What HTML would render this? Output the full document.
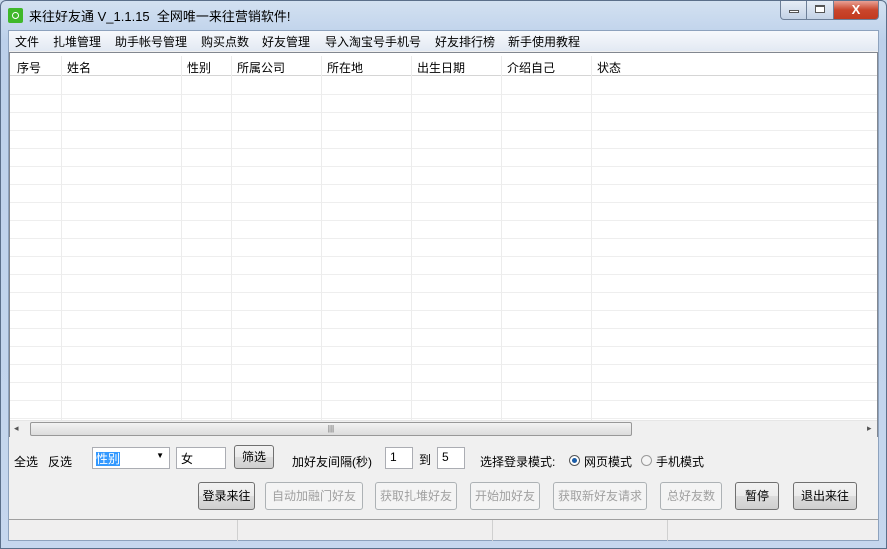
<!DOCTYPE html>
<html><head><meta charset="utf-8"><style>
*{margin:0;padding:0;box-sizing:border-box}
body{width:887px;height:549px;overflow:hidden;background:#c9d9ec;font-family:"Liberation Sans","Noto Sans CJK SC","WenQuanYi Zen Hei",sans-serif;font-size:12px;color:#000;position:relative}
.abs{position:absolute}
.frame{left:0;top:0;width:887px;height:549px;background:linear-gradient(#d3e1f1,#bcd0ea 40px,#c6d7ee);border:1px solid #5b6f8a;border-radius:6px 6px 0 0}
.client{left:8px;top:30px;width:871px;height:511px;background:#f0f0f0;border:1px solid #8da2bd}
.title{left:29px;top:6px;font-size:13px;color:#000}
.icon{left:8px;top:8px;width:15px;height:15px;background:#3fb82a;border-radius:2px}
.icon:after{content:"";position:absolute;left:4px;top:4px;width:5px;height:5px;border:1.3px solid #fff;border-radius:50%}
.menu{left:9px;top:31px;width:869px;height:20px;background:linear-gradient(#f7f9fc,#e2e9f3)}
.menu span{position:absolute;top:2px;font-size:12px}
.table{left:9px;top:52px;width:869px;height:385px;background:#fff;border:1px solid #828790}
.hdr{left:0;top:3px;width:867px;height:20px;background:#fff;border-bottom:1px solid #d5d5d5}
.hdr span{position:absolute;top:3px}
.rows{left:0;top:24px;width:867px;height:343px;background:repeating-linear-gradient(#fff 0,#fff 17px,#eeeeee 17px,#eeeeee 18px)}
.vl{position:absolute;top:3px;width:1px;height:364px;background:#ececec}
.sb{left:0;top:367px;width:867px;height:17px;background:#f0f0f0;border-top:1px solid #e6e6e6}
.thumb{left:20px;top:1px;width:602px;height:14px;border:1px solid #989898;border-radius:2px;background:linear-gradient(#f3f3f3,#dcdcdc)}
.btn{position:absolute;top:482px;height:28px;border:1px solid #707070;border-radius:3px;background:linear-gradient(#f2f2f2,#ebebeb 50%,#dddddd 50%,#cfcfcf);text-align:center;line-height:26px;font-size:12px}
.dis{border-color:#adb2b5;background:#f4f4f4;color:#a0a0a0}
.inp{position:absolute;height:22px;background:#fff;border:1px solid #abadb3;padding:2px 4px}
.status{left:9px;top:519px;width:869px;height:21px;background:#f0efef;border-top:1px solid #a0a0a0}
.wb{top:1px;height:19px;border:1px solid #6d7f98;border-top:none}
</style></head><body>
<div class="abs frame"></div>
<div class="abs icon"></div>
<div class="abs title">来往好友通 V_1.1.15&nbsp; 全网唯一来往营销软件!</div>
<div class="abs wb" style="left:780px;width:27px;border-radius:0 0 0 4px;background:linear-gradient(#e6edf6,#c3d2e6)"><div class="abs" style="left:8px;top:9px;width:10px;height:3px;border:1px solid #555;background:#fff"></div></div>
<div class="abs wb" style="left:806px;width:28px;background:linear-gradient(#e6edf6,#c3d2e6)"><div class="abs" style="left:8px;top:4px;width:10px;height:8px;border:1px solid #555;border-top-width:2px;background:#fff"></div></div>
<div class="abs wb" style="left:833px;width:46px;border-radius:0 0 4px 0;background:linear-gradient(#e9a195,#c9462c 50%,#c23a1f);color:#fff;font-weight:bold;font-size:13px;text-align:center;line-height:17px">X</div>
<div class="abs client"></div>
<div class="abs menu">
<span style="left:6px">文件</span><span style="left:44px">扎堆管理</span><span style="left:106px">助手帐号管理</span><span style="left:192px">购买点数</span><span style="left:253px">好友管理</span><span style="left:316px">导入淘宝号手机号</span><span style="left:426px">好友排行榜</span><span style="left:499px">新手使用教程</span>
</div>
<div class="abs table">
<div class="abs rows"></div>
<div class="abs hdr">
<span style="left:7px">序号</span><span style="left:57px">姓名</span><span style="left:177px">性别</span><span style="left:227px">所属公司</span><span style="left:317px">所在地</span><span style="left:407px">出生日期</span><span style="left:497px">介绍自己</span><span style="left:587px">状态</span>
</div>
<div class="vl" style="left:51px"></div><div class="vl" style="left:171px"></div><div class="vl" style="left:221px"></div><div class="vl" style="left:311px"></div><div class="vl" style="left:401px"></div><div class="vl" style="left:491px"></div><div class="vl" style="left:581px"></div>
<div class="abs sb"><div class="abs" style="left:4px;top:2px;font-size:9px;color:#555">◂</div><div class="abs thumb"><div style="text-align:center;font-size:8px;line-height:12px;color:#555">|||</div></div><div class="abs" style="left:857px;top:2px;font-size:9px;color:#555">▸</div></div>
</div>
<div class="abs" style="left:14px;top:453px">全选</div>
<div class="abs" style="left:48px;top:453px">反选</div>
<div class="inp" style="left:92px;top:447px;width:78px;padding:2px 3px"><span style="background:#3399ff;color:#fff">性别</span><span style="position:absolute;right:5px;top:3px;font-size:8px">▼</span></div>
<div class="inp" style="left:176px;top:447px;width:50px">女</div>
<div class="btn" style="left:234px;top:445px;width:40px;height:24px;line-height:22px">筛选</div>
<div class="abs" style="left:292px;top:453px">加好友间隔(秒)</div>
<div class="inp" style="left:385px;top:447px;width:28px">1</div>
<div class="abs" style="left:419px;top:451px">到</div>
<div class="inp" style="left:437px;top:447px;width:28px">5</div>
<div class="abs" style="left:480px;top:453px">选择登录模式:</div>
<div class="abs" style="left:569px;top:455px;width:11px;height:11px;border:1px solid #555;border-radius:50%;background:#fff"><div class="abs" style="left:2px;top:2px;width:5px;height:5px;border-radius:50%;background:#1a5da8"></div></div>
<div class="abs" style="left:584px;top:453px">网页模式</div>
<div class="abs" style="left:641px;top:455px;width:11px;height:11px;border:1px solid #999;border-radius:50%;background:#f4f4f4"></div>
<div class="abs" style="left:656px;top:453px">手机模式</div>
<div class="btn" style="left:198px;width:57px">登录来往</div>
<div class="btn dis" style="left:265px;width:98px">自动加融门好友</div>
<div class="btn dis" style="left:375px;width:82px">获取扎堆好友</div>
<div class="btn dis" style="left:470px;width:70px">开始加好友</div>
<div class="btn dis" style="left:553px;width:94px">获取新好友请求</div>
<div class="btn dis" style="left:660px;width:62px">总好友数</div>
<div class="btn" style="left:735px;width:44px">暂停</div>
<div class="btn" style="left:793px;width:64px">退出来往</div>
<div class="abs status">
<div class="abs" style="left:228px;top:0;width:1px;height:21px;background:#d0d0d0"></div>
<div class="abs" style="left:483px;top:0;width:1px;height:21px;background:#d0d0d0"></div>
<div class="abs" style="left:658px;top:0;width:1px;height:21px;background:#d0d0d0"></div>
</div>
</body></html>
